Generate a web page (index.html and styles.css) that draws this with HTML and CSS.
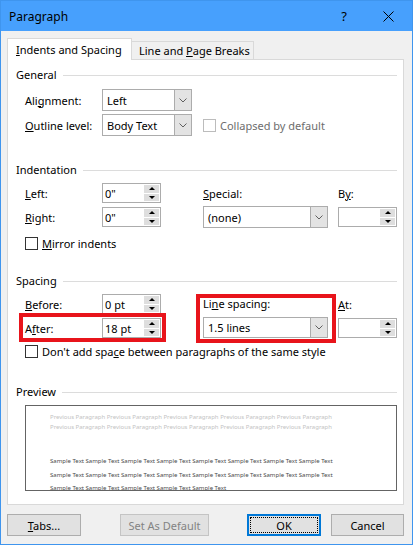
FILE: index.html
```html
<!DOCTYPE html>
<html>
<head>
<meta charset="utf-8">
<title>Paragraph</title>
<link rel="stylesheet" href="styles.css">
</head>
<body>
<div class="window">
  <div class="titlebar">
    <span class="title">Paragraph</span>
    <span class="tbtn help">?</span>
    <span class="tbtn close"><svg width="11" height="11" viewBox="0 0 11 11"><path d="M0.5 0.5L10.5 10.5M10.5 0.5L0.5 10.5" stroke="#000" stroke-width="1" fill="none"/></svg></span>
  </div>

  <div class="tabs">
    <div class="tab active"><span><u>I</u>ndents and Spacing</span></div>
    <div class="tab inactive"><span>Line and <u>P</u>age Breaks</span></div>
  </div>

  <div class="panel">
    <div class="group">
      <div class="ghead"><span>General</span><i></i></div>
      <div class="grid g-general">
        <label class="lbl c1 r1"><span>Ali<u>g</u>nment:</span></label>
        <div class="combo w90 c2 r1"><span class="val">Left</span><span class="arrow"><svg width="8" height="5" viewBox="0 0 8 5"><path d="M0.5 0.5L4 4L7.5 0.5" stroke="#606060" fill="none"/></svg></span></div>
        <label class="lbl c1 r2"><span><u>O</u>utline level:</span></label>
        <div class="combo w90 c2 r2"><span class="val">Body Text</span><span class="arrow"><svg width="8" height="5" viewBox="0 0 8 5"><path d="M0.5 0.5L4 4L7.5 0.5" stroke="#606060" fill="none"/></svg></span></div>
        <div class="check disabled c34 r2"><span class="box"></span><span class="txt">Collapsed by default</span></div>
      </div>
    </div>

    <div class="group g2">
      <div class="ghead"><span>Indentation</span><i></i></div>
      <div class="grid g-rows">
        <label class="lbl c1 r1"><span><u>L</u>eft:</span></label>
        <div class="spin c2 r1"><span class="val">0"</span><span class="btns"><i class="up"></i><i class="dn"></i></span></div>
        <label class="lbl c3 r1"><span><u>S</u>pecial:</span></label>
        <label class="lbl c4 r1"><span>B<u>y</u>:</span></label>
        <label class="lbl c1 r2"><span><u>R</u>ight:</span></label>
        <div class="spin c2 r2"><span class="val">0"</span><span class="btns"><i class="up"></i><i class="dn"></i></span></div>
        <div class="combo w125 c3 r2"><span class="val">(none)</span><span class="arrow"><svg width="8" height="5" viewBox="0 0 8 5"><path d="M0.5 0.5L4 4L7.5 0.5" stroke="#606060" fill="none"/></svg></span></div>
        <div class="spin c4 r2"><span class="val"></span><span class="btns"><i class="up"></i><i class="dn"></i></span></div>
      </div>
      <div class="checkrow mirror"><span class="box"></span><span class="txt"><u>M</u>irror indents</span></div>
    </div>

    <div class="group g3">
      <div class="ghead"><span>Spacing</span><i></i></div>
      <div class="grid g-rows">
        <label class="lbl c1 r1"><span><u>B</u>efore:</span></label>
        <div class="spin c2 r1"><span class="val">0 pt</span><span class="btns"><i class="up"></i><i class="dn"></i></span></div>
        <div class="linewrap c3 r12">
          <label class="lbl lbl20"><span>Li<u>n</u>e spacing:</span></label>
          <div class="combo w125"><span class="val">1.5 lines</span><span class="arrow"><svg width="8" height="5" viewBox="0 0 8 5"><path d="M0.5 0.5L4 4L7.5 0.5" stroke="#606060" fill="none"/></svg></span></div>
        </div>
        <label class="lbl c4 r1"><span><u>A</u>t:</span></label>
        <div class="afterwrap c12 r2">
          <label class="lbl w77"><span>A<u>f</u>ter:</span></label>
          <div class="spin"><span class="val">18 pt</span><span class="btns"><i class="up"></i><i class="dn"></i></span></div>
        </div>
        <div class="spin c4 r2"><span class="val"></span><span class="btns"><i class="up"></i><i class="dn"></i></span></div>
      </div>
      <div class="checkrow dontadd"><span class="box"></span><span class="txt">Don't add spa<u>c</u>e between paragraphs of the same style</span></div>
    </div>

    <div class="group g4">
      <div class="ghead"><span>Preview</span><i></i></div>
      <div class="preview">
        <div class="prev">Previous Paragraph Previous Paragraph Previous Paragraph Previous Paragraph Previous Paragraph</div>
        <div class="prev">Previous Paragraph Previous Paragraph Previous Paragraph Previous Paragraph Previous Paragraph</div>
        <div class="sample">
          <div>Sample Text Sample Text Sample Text Sample Text Sample Text Sample Text Sample Text Sample Text</div>
          <div>Sample Text Sample Text Sample Text Sample Text Sample Text Sample Text Sample Text Sample Text</div>
          <div>Sample Text Sample Text Sample Text Sample Text Sample Text</div>
        </div>
      </div>
    </div>
  </div>

  <div class="buttons">
    <div class="btn b-tabs"><span><u>T</u>abs...</span></div>
    <div class="btn b-default"><span>Set As Default</span></div>
    <div class="btn b-ok"><span>OK</span></div>
    <div class="btn b-cancel"><span>Cancel</span></div>
  </div>
</div>
</body>
</html>
```

FILE: styles.css
```css
* { box-sizing: border-box; }

body { margin: 0; }

.window {
  width: 413px;
  height: 545px;
  border: 1px solid #3f95ee;
  background: #f0f0f0;
  font-family: "Noto Sans", sans-serif;
  font-size: 11px;
  color: #000;
  overflow: hidden;
}

/* title bar */
.titlebar {
  height: 30px;
  background: #47a0fd;
  display: flex;
  align-items: center;
  padding-left: 8px;
}
.title { flex: 1; font-size: 12px; }
.tbtn {
  width: 46px;
  height: 30px;
  display: flex;
  align-items: center;
  justify-content: center;
}
.help { font-size: 13px; }
.close { width: 42px; margin-right: 3px; }
.close svg { display: block; }

/* tabs */
.tabs {
  display: flex;
  align-items: flex-end;
  height: 21px;
  margin: 7px 0 0 6px;
}
.tab {
  display: flex;
  align-items: center;
  border: 1px solid #d9d9d9;
  border-bottom: none;
  white-space: nowrap;
}
.tab.active {
  width: 125px;
  height: 22px;
  margin-bottom: -1px;
  background: #fff;
  padding-left: 8px;
  position: relative;
  z-index: 1;
}
.tab.inactive {
  width: 122px;
  height: 18px;
  border-left: none;
  padding-left: 7px;
  background: #f0f0f0;
}

/* panel */
.panel {
  margin-left: 6px;
  width: 397px;
  height: 446px;
  border: 1px solid #d9d9d9;
  background: #fff;
  padding: 7px 6px 0 8px;
}
.g2 { margin-top: 26px; }
.g3 { margin-top: 23px; }
.g4 { margin-top: 26px; }

.ghead {
  display: flex;
  align-items: center;
  height: 16px;
  line-height: 16px;
  white-space: nowrap;
}
.ghead i {
  flex: 1;
  height: 1px;
  background: #dcdcdc;
  margin-left: 6px;
}

.grid {
  display: grid;
  grid-template-columns: 77px 101px 135px 59px;
  margin-left: 9px;
}
.g-general { grid-template-rows: 22px 22px; row-gap: 3px; margin-top: 6px; }
.g-rows { grid-template-rows: 20px 20px; row-gap: 4px; margin-top: 5px; }

.c1 { grid-column: 1; }
.c2 { grid-column: 2; }
.c3 { grid-column: 3; }
.c4 { grid-column: 4; }
.c12 { grid-column: 1 / 3; }
.c34 { grid-column: 3 / 5; }
.r1 { grid-row: 1; }
.r2 { grid-row: 2; }
.r12 { grid-row: 1 / 3; }

.lbl {
  display: flex;
  align-items: center;
  white-space: nowrap;
}
.lbl20 { height: 20px; margin-bottom: 3px; }
.w77 { width: 77px; height: 20px; flex: none; }

/* combo box */
.combo {
  height: 22px;
  align-self: center;
  border: 1px solid #acacac;
  background: #fff;
  display: flex;
}
.w90 { width: 90px; }
.w125 { width: 125px; }
.combo .val {
  flex: 1;
  padding-left: 4px;
  display: flex;
  align-items: center;
  white-space: nowrap;
}
.combo .arrow {
  width: 17px;
  background: #e3e3e3;
  border-left: 1px solid #acacac;
  display: flex;
  align-items: center;
  justify-content: center;
}
.combo .arrow svg { display: block; }

/* spinner */
.spin {
  width: 59px;
  height: 20px;
  align-self: center;
  border: 1px solid #acacac;
  background: #fff;
  padding: 1px;
  display: flex;
}
.spin .val {
  flex: 1;
  padding-left: 1px;
  display: flex;
  align-items: center;
  white-space: nowrap;
}
.spin .btns {
  width: 15px;
  display: flex;
  flex-direction: column;
  gap: 1px;
}
.spin .btns i {
  flex: 1;
  background: #dedede;
  display: flex;
  align-items: center;
  justify-content: center;
}
.spin .btns i::before {
  content: "";
  width: 0;
  height: 0;
  border-left: 3px solid transparent;
  border-right: 3px solid transparent;
}
.spin .btns i.up::before { border-bottom: 3px solid #000; }
.spin .btns i.dn::before { border-top: 3px solid #000; }

/* checkboxes */
.check, .checkrow {
  display: flex;
  align-items: center;
  white-space: nowrap;
}
.checkrow { margin-left: 9px; height: 13px; }
.mirror { margin-top: 10px; }
.dontadd { margin-top: 7px; }
.box {
  width: 13px;
  height: 13px;
  border: 1px solid #333;
  background: #fff;
  flex: none;
}
.txt { margin-left: 4px; }
.check.disabled .box { border-color: #bcbcbc; }
.check.disabled .txt { color: #6d6d6d; }

/* highlight boxes */
.linewrap {
  display: flex;
  flex-direction: column;
  width: 125px;
  position: relative;
}
.afterwrap {
  display: flex;
  align-items: center;
  justify-self: start;
  width: 136px;
  position: relative;
}
.linewrap::after, .afterwrap::after {
  content: "";
  position: absolute;
  border: 4px solid #e8141b;
  pointer-events: none;
}
.linewrap::after { top: 0; left: -7px; right: -8px; bottom: -5px; }
.afterwrap::after { top: -5px; left: -6px; right: -5px; bottom: -4px; }

/* preview */
.preview {
  margin: 5px 0 0 9px;
  height: 86px;
  border: 1px solid #646464;
  overflow: hidden;
  padding: 6px 0 0 24px;
  font-size: 6px;
  white-space: nowrap;
}
.prev { color: #c3c3c3; line-height: 10px; }
.sample { color: #4a4a4a; line-height: 13.5px; margin-top: 23px; }

/* buttons */
.buttons {
  display: flex;
  margin: 9px 0 0 6px;
}
.btn {
  height: 22px;
  border: 1px solid #adadad;
  background: #e1e1e1;
  display: flex;
  align-items: center;
  justify-content: center;
  white-space: nowrap;
}
.b-tabs { width: 74px; }
.b-default { width: 89px; margin-left: 39px; color: #838383; border-color: #c4c4c4; }
.b-ok {
  width: 74px;
  margin-left: 38px;
  border: 2px solid #0078d7;
  outline: 1px dotted #000;
  outline-offset: -4px;
}
.b-cancel { width: 73px; margin-left: 10px; }
```
